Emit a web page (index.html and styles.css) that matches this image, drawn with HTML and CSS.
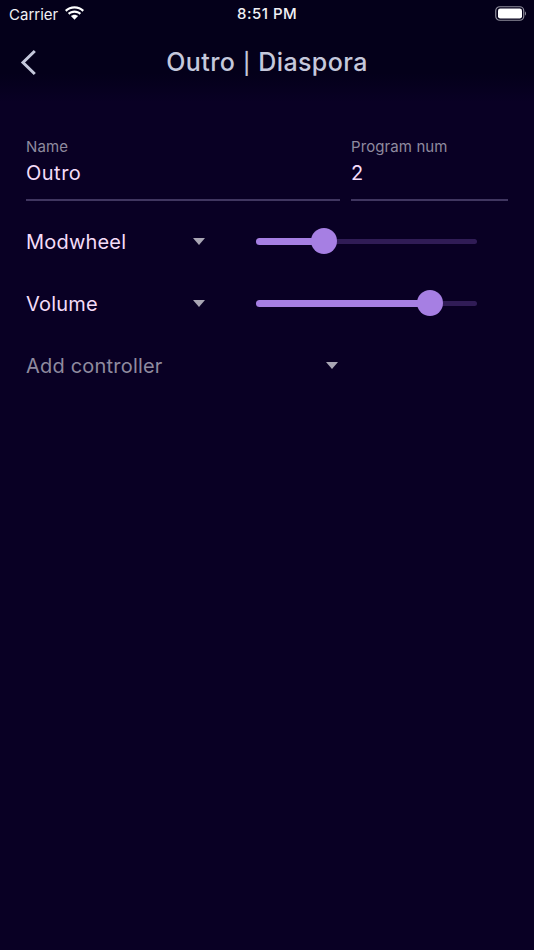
FILE: index.html
```html
<!DOCTYPE html>
<html lang="en">
<head>
<meta charset="utf-8">
<title>Outro | Diaspora</title>
<link rel="stylesheet" href="styles.css">
</head>
<body>
<div class="screen">
  <header class="appbar">
    <div class="status">
      <div class="status-left">
        <span>Carrier</span>
        <svg class="wifi" width="19" height="14" viewBox="1.700 1.200 16.600 11.800"><path d="M10 3.200c2.700 0 5.100 1 7 2.700l1.300-1.400C16.100 2.400 13.200 1.200 10 1.200S3.900 2.400 1.700 4.500L3 5.900c1.900-1.700 4.300-2.700 7-2.700z" fill="#fff"/><path d="M10 6.900c1.700 0 3.200.6 4.400 1.700l1.400-1.400C14.200 5.800 12.200 4.900 10 4.900s-4.200.9-5.800 2.300l1.400 1.400C6.800 7.500 8.300 6.900 10 6.900z" fill="#fff"/><path d="M10 8.600c-1.200 0-2.300.5-3.100 1.200L10 13l3.100-3.200C12.300 9.100 11.200 8.600 10 8.600z" fill="#fff"/></svg>
      </div>
      <span class="clock">8:51 PM</span>
      <svg class="battery" width="31" height="15" viewBox="0 0 31 15"><rect x=".75" y=".75" width="28" height="13.500" rx="4" fill="none" stroke="#8f8d9c" stroke-width="1.200"/><rect x="3" y="2.500" width="24" height="10" rx="2.200" fill="#fff"/><path d="M30 5.500c.7.300 1 1.100 1 2s-.3 1.700-1 2z" fill="#8f8d9c"/></svg>
    </div>
    <div class="navbar">
      <svg class="back" width="16" height="28" viewBox="0 0 16 28"><path d="M14.800 3 3 14.500 14.800 26" fill="none" stroke="#c5c8dc" stroke-width="3"/></svg>
      <h1 class="title">Outro <span class="pipe">|</span> Diaspora</h1>
    </div>
  </header>
  <main class="content">
    <div class="fields">
      <div class="field field-name">
        <span class="field-label">Name</span>
        <span class="field-value">Outro</span>
      </div>
      <div class="field field-num">
        <span class="field-label">Program num</span>
        <span class="field-value">2</span>
      </div>
    </div>
    <div class="row">
      <div class="picker"><span>Modwheel</span><i class="caret"></i></div>
      <div class="slider">
        <div class="track"><div class="fill" style="width:68px"></div></div>
        <div class="thumb" style="left:55px"></div>
      </div>
    </div>
    <div class="row">
      <div class="picker"><span>Volume</span><i class="caret"></i></div>
      <div class="slider">
        <div class="track"><div class="fill" style="width:174px"></div></div>
        <div class="thumb" style="left:161px"></div>
      </div>
    </div>
    <div class="row add">
      <div class="picker picker-add"><span>Add controller</span><i class="caret"></i></div>
    </div>
  </main>
</div>
</body>
</html>
```
FILE: styles.css
```css
* { box-sizing: border-box; }
html, body { margin: 0; padding: 0; }
body {
  width: 534px;
  height: 950px;
  overflow: hidden;
  background: #090024;
  font-family: Inter, "Noto Sans", sans-serif;
}
.screen { width: 534px; height: 950px; display: flex; flex-direction: column; }
.appbar {
  height: 102px;
  flex: none;
  background: linear-gradient(180deg, #04001a 0%, #04001a 72%, #090024 100%);
}
.status {
  height: 28px;
  padding: 0 9px;
  display: flex;
  align-items: center;
  justify-content: space-between;
  color: #f1f1f5;
  font-size: 15px;
  position: relative;
}
.status-left { display: flex; align-items: center; gap: 7px; }
.wifi { margin-top: -3px; }
.clock { font-weight: 500; position: absolute; left: 237px; top: 5px; line-height: 18px; letter-spacing: .5px; }
.battery { margin-right: -1px; margin-top: -1px; }
.navbar {
  height: 68px;
  position: relative;
  display: flex;
  align-items: center;
  justify-content: center;
}
.back { position: absolute; left: 20px; top: 20px; }
.title {
  margin: 0;
  font-size: 25px;
  font-weight: 500;
  letter-spacing: .4px;
  color: #c5c8dc;
}
.pipe { font-size: 21px; margin: 0 .6px; }
.content { padding: 36px 26px 0; }
.fields { display: flex; gap: 11px; }
.field {
  height: 63px;
  display: flex;
  flex-direction: column;
  border-bottom: 2px solid #403660;
}
.field-name { width: 314px; }
.field-num { width: 157px; }
.field-label { font-size: 15px; line-height: 17px; color: #8f8b9f; letter-spacing: .1px; }
.field-value { font-size: 20px; line-height: 24px; margin-top: 6px; color: #f4dcf8; letter-spacing: .5px; }
.row { height: 62px; display: flex; align-items: center; }
.fields + .row { margin-top: 9px; }
.picker {
  width: 180px;
  padding-top: 1px;
  display: flex;
  align-items: center;
  justify-content: space-between;
  font-size: 20px;
  letter-spacing: .2px;
  color: #f4dcf8;
}
.picker-add { width: 312px; color: #8f8b9f; }
.caret {
  width: 0;
  height: 0;
  margin-right: 1px;
  border-left: 6.250px solid transparent;
  border-right: 6.250px solid transparent;
  border-top: 7px solid #a9a6b4;
}
.picker-add .caret { margin-right: 0; }
.slider { position: relative; width: 221px; height: 26px; margin-left: 50px; }
.track {
  position: absolute;
  left: 0;
  right: 0;
  top: 11px;
  height: 5px;
  border-radius: 3px;
  background: #301c56;
  display: flex;
  align-items: center;
}
.fill { height: 7px; flex: none; background: #a67fe3; border-radius: 4px 0 0 4px; }
.thumb {
  position: absolute;
  top: 0;
  width: 26px;
  height: 26px;
  border-radius: 50%;
  background: #a67fe3;
}
```
